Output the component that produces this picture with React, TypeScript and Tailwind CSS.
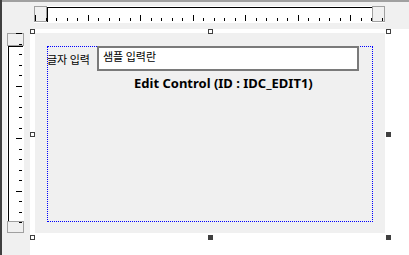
import React from "react";

const hTicks = Array.from({ length: 34 }, (_, k) => ({
  x: Math.floor(35.5 + 10.5 * k) - 34,
  long: k % 5 === 0,
}));
const vTicks = Array.from({ length: 20 }, (_, k) => ({
  y: Math.floor(33.7 + 10.5 * k) - 33,
  long: k % 5 === 0,
}));

function Handle({ filled, className }: { filled?: boolean; className: string }) {
  return (
    <div
      className={`absolute w-[5px] h-[5px] border border-[#404040] ${
        filled ? "bg-[#404040]" : "bg-white"
      } ${className}`}
    />
  );
}

export default function App() {
  return (
    <div className="w-[409px] h-[255px] flex bg-[#f0f0f0] overflow-hidden">
      <div className="w-[2px] h-full bg-[#404040]" />
      <div className="flex-1 flex flex-col">
        <div className="h-[2px] bg-[#a0a0a0]" />
        <div className="flex-1 grid grid-cols-[28px_1fr] grid-rows-[27px_1fr]">
          <div />
          {/* horizontal ruler */}
          <div className="pl-[4px] pt-[4px]">
            <div className="relative w-[351px] h-[17px] bg-white flex items-start">
              <div className="w-[13px] h-[16px] border border-[#a0a0a0] bg-[#f0f0f0]" />
              <div className="w-[325px] h-[15px] mt-[1px] border-t border-l border-black" />
              <div className="w-[13px] h-[16px] border border-[#a0a0a0] bg-[#f0f0f0]" />
              <svg
                className="absolute left-0 top-0 pointer-events-none"
                width="351"
                height="17"
                shapeRendering="crispEdges"
              >
                {hTicks.map((t, i) => (
                  <rect
                    key={i}
                    x={t.x}
                    y={t.long ? 9 : 12}
                    width={1}
                    height={t.long ? 6 : 3}
                    fill="#000"
                  />
                ))}
              </svg>
            </div>
          </div>
          {/* vertical ruler */}
          <div className="pl-[5px] pt-[4px]">
            <div className="relative w-[17px] h-[200px] bg-white flex flex-col">
              <div className="h-[13px] border border-[#a0a0a0] bg-[#f0f0f0]" />
              <div className="flex-1 ml-[1px] mr-[1px] border-l border-t border-black" />
              <div className="h-[12px] border border-[#a0a0a0] bg-[#f0f0f0]" />
              <svg
                className="absolute left-0 top-0 pointer-events-none"
                width="17"
                height="200"
                shapeRendering="crispEdges"
              >
                {vTicks.map((t, i) => (
                  <rect
                    key={i}
                    x={t.long ? 9 : 12}
                    y={t.y}
                    width={t.long ? 6 : 3}
                    height={1}
                    fill="#000"
                  />
                ))}
              </svg>
            </div>
          </div>
          {/* canvas */}
          <div className="relative bg-white">
            <div className="ml-[5px] mt-[4px] w-[350px] h-[200px] bg-[#f0f0f0] relative">
              <div className="absolute left-[12px] top-[13px] w-[326px] h-[176px] border border-dotted border-[#0000ff]" />
              <div
                className="absolute left-[12px] top-[21px] text-[11px] leading-[11px] text-black whitespace-nowrap"
                style={{ fontFamily: '"Noto Sans CJK KR", "Noto Sans", sans-serif' }}
              >
                글자 입력
              </div>
              <div className="absolute left-[62px] top-[13px] w-[262px] h-[25px] border-2 border-[#7a7a7a] bg-white">
                <div
                  className="pl-[4px] pt-[3px] text-[11px] leading-[11px] text-black whitespace-nowrap"
                  style={{ fontFamily: '"Noto Sans CJK KR", "Noto Sans", sans-serif' }}
                >
                  샘플 입력란
                </div>
              </div>
              <div
                className="absolute left-[99px] top-[44px] text-[13px] leading-[13px] font-bold text-black whitespace-nowrap"
                style={{ fontFamily: '"Noto Sans", "Noto Sans CJK KR", sans-serif' }}
              >
                Edit Control (ID : IDC_EDIT1)
              </div>
            </div>
            <Handle className="left-0 top-0" />
            <Handle className="left-[178px] top-0" />
            <Handle className="left-[356px] top-0" />
            <Handle className="left-0 top-[103px]" />
            <Handle filled className="left-[356px] top-[103px]" />
            <Handle className="left-0 top-[206px]" />
            <Handle filled className="left-[178px] top-[206px]" />
            <Handle filled className="left-[356px] top-[206px]" />
          </div>
        </div>
      </div>
    </div>
  );
}
